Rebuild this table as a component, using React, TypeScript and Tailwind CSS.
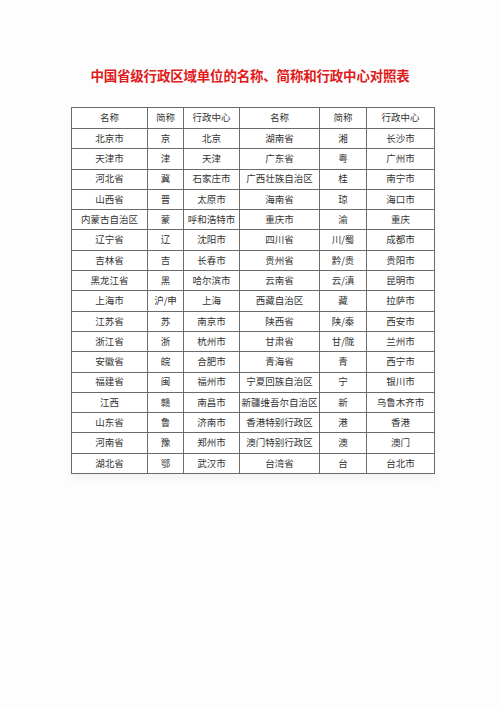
const HEAD = ['名称', '简称', '行政中心', '名称', '简称', '行政中心'];

const ROWS: string[][] = [
  ['北京市', '京', '北京', '湖南省', '湘', '长沙市'],
  ['天津市', '津', '天津', '广东省', '粤', '广州市'],
  ['河北省', '冀', '石家庄市', '广西壮族自治区', '桂', '南宁市'],
  ['山西省', '晋', '太原市', '海南省', '琼', '海口市'],
  ['内蒙古自治区', '蒙', '呼和浩特市', '重庆市', '渝', '重庆'],
  ['辽宁省', '辽', '沈阳市', '四川省', '川/蜀', '成都市'],
  ['吉林省', '吉', '长春市', '贵州省', '黔/贵', '贵阳市'],
  ['黑龙江省', '黑', '哈尔滨市', '云南省', '云/滇', '昆明市'],
  ['上海市', '沪/申', '上海', '西藏自治区', '藏', '拉萨市'],
  ['江苏省', '苏', '南京市', '陕西省', '陕/秦', '西安市'],
  ['浙江省', '浙', '杭州市', '甘肃省', '甘/陇', '兰州市'],
  ['安徽省', '皖', '合肥市', '青海省', '青', '西宁市'],
  ['福建省', '闽', '福州市', '宁夏回族自治区', '宁', '银川市'],
  ['江西', '赣', '南昌市', '新疆维吾尔自治区', '新', '乌鲁木齐市'],
  ['山东省', '鲁', '济南市', '香港特别行政区', '港', '香港'],
  ['河南省', '豫', '郑州市', '澳门特别行政区', '澳', '澳门'],
  ['湖北省', '鄂', '武汉市', '台湾省', '台', '台北市'],
];

export default function App() {
  return (
    <div className="h-[708px] w-[500px] bg-[#fdfdfd] font-['Noto_Sans_CJK_SC',sans-serif] pt-[65px]">
      <h1 className="text-center text-[13.5px] font-bold leading-[20px] tracking-[-0.2px] text-[#e01b1b]">
        中国省级行政区域单位的名称、简称和行政中心对照表
      </h1>
      <div className="ml-[71px] mt-[22px] w-[363px] shadow-[0_6px_6px_rgba(0,0,0,0.04)]">
        <table className="w-[363px] table-fixed border-collapse bg-white text-[9.5px] text-[#333]">
          <colgroup>
            <col className="w-[76px]" />
            <col className="w-[36px]" />
            <col className="w-[56px]" />
            <col className="w-[80px]" />
            <col className="w-[47px]" />
            <col className="w-[68px]" />
          </colgroup>
          <thead>
            <tr className="h-[21px]">
              {HEAD.map((h, i) => (
                <th key={i} className="border border-[#6b6b6b] p-0 text-center font-normal leading-none">
                  {h}
                </th>
              ))}
            </tr>
          </thead>
          <tbody>
            {ROWS.map((row, r) => (
              <tr key={r} className="h-[20.3px]">
                {row.map((cell, c) => (
                  <td
                    key={c}
                    className="whitespace-nowrap border border-[#6b6b6b] p-0 text-center leading-none"
                  >
                    {cell}
                  </td>
                ))}
              </tr>
            ))}
          </tbody>
        </table>
      </div>
    </div>
  );
}
